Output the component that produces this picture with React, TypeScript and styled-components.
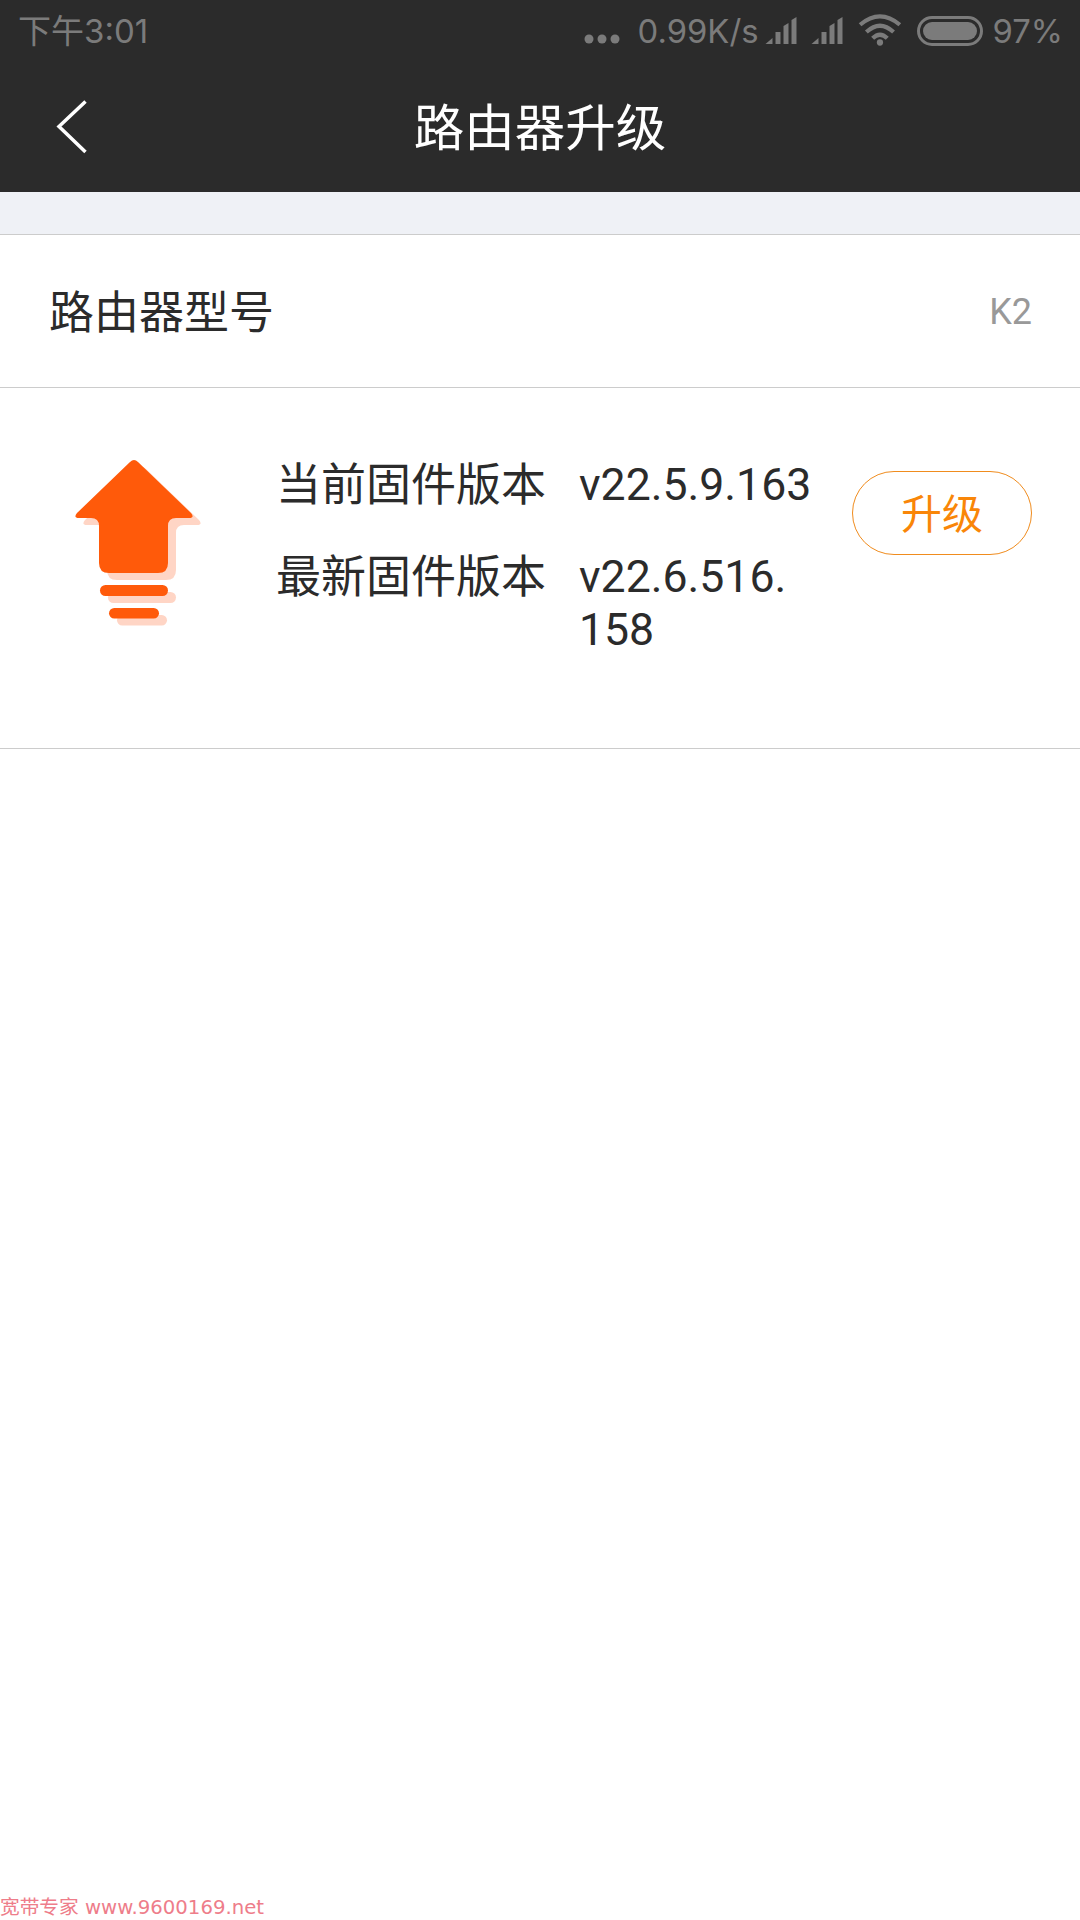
import React from "react";
import styled, { createGlobalStyle } from "styled-components";

const FONT = `Roboto, "Noto Sans CJK SC", sans-serif`;

const Global = createGlobalStyle`
  html, body { margin: 0; padding: 0; background: #fff; }
  body { font-family: ${FONT}; }
  * { box-sizing: border-box; }
`;

const Page = styled.div`
  position: relative;
  width: 1080px;
  height: 1920px;
  background: #fff;
  overflow: hidden;
`;

const Header = styled.header`
  height: 192px;
  background: #2b2b2b;
  display: flex;
  flex-direction: column;
`;

const StatusBar = styled.div`
  height: 62px;
  padding: 0 17px 0 18px;
  display: flex;
  align-items: center;
  justify-content: space-between;
  color: #7b7b7b;
`;

const StatusRight = styled.div`
  display: flex;
  align-items: center;
`;

const StatusText = styled.span<{ $ml?: number; $size?: number }>`
  margin-left: ${(p) => p.$ml ?? 0}px;
  font-size: ${(p) => p.$size ?? 32.8}px;
  line-height: 62px;
  font-family: "Inter", ${FONT};
  font-weight: 400;
`;

const StatusIcon = styled.svg<{ $ml?: number; $mt?: number }>`
  display: block;
  margin-left: ${(p) => p.$ml ?? 0}px;
  margin-top: ${(p) => p.$mt ?? 0}px;
  flex: none;
`;

const NavBar = styled.div`
  position: relative;
  flex: 1;
  display: flex;
  align-items: center;
  justify-content: center;
`;

const Back = styled.svg`
  position: absolute;
  left: 56px;
  top: 38px;
`;

const Title = styled.h1`
  margin: 0 0 6px;
  color: #fff;
  font-size: 50.5px;
  font-weight: 400;
`;

const Spacer = styled.div`
  height: 43px;
  background: #eff1f6;
  border-bottom: 1px solid #cccccc;
`;

const ModelRow = styled.div`
  height: 153px;
  padding: 0 48px 0 49px;
  display: flex;
  align-items: center;
  justify-content: space-between;
  border-bottom: 1px solid #cccccc;
`;

const ModelLabel = styled.span`
  font-size: 45px;
  color: #2b2b2b;
  margin-bottom: 4px;
`;

const ModelValue = styled.span`
  font-size: 36px;
  color: #999;
  margin-top: 2px;
`;

const FirmwareCard = styled.section`
  height: 361px;
  padding: 0 48px 0 70px;
  display: flex;
  align-items: flex-start;
  border-bottom: 1px solid #cccccc;
`;

const ArrowIcon = styled.svg`
  display: block;
  margin-top: 67px;
  flex: none;
`;

const Versions = styled.div`
  margin-left: 71px;
  padding-top: 71px;
  width: 576px;
  flex: none;
`;

const VersionRow = styled.div`
  display: flex;
  margin-bottom: 39px;
`;

const VersionLabel = styled.span`
  width: 303px;
  flex: none;
  font-size: 45px;
  line-height: 53px;
  color: #2b2b2b;
`;

const VersionValue = styled.span`
  width: 240px;
  font-size: 44.6px;
  line-height: 53px;
  color: #2b2b2b;
`;

const UpgradeButton = styled.button`
  width: 180px;
  height: 84px;
  margin-top: 83px;
  flex: none;
  border: 1.5px solid #f08c1e;
  border-radius: 42px;
  background: #fff;
  color: #f98608;
  font-family: ${FONT};
  font-size: 41px;
  padding: 0 0 4px;
`;

const Watermark = styled.div`
  position: absolute;
  left: 0;
  bottom: 0;
  height: 25px;
  line-height: 25px;
  color: #ee7d8a;
  font-size: 19.7px;
  white-space: nowrap;
  font-family: "DejaVu Sans", "Noto Sans CJK SC", sans-serif;
`;

const Signal = ({ ml }: { ml: number }) => (
  <StatusIcon $ml={ml} width="33" height="30" viewBox="0 0 32 30" fill="#7b7b7b">
    <path d="M0 28 L7 22 V28 Z" />
    <rect x="10" y="16" width="5" height="12" />
    <path d="M18 10 L23 7 V28 H18 Z" />
    <path d="M26 4 L31 1 V28 H26 Z" />
  </StatusIcon>
);

const ArrowShape = () => (
  <>
    <path d="M60 7 Q64 3 68 7 L121 58 Q125 63 119 63 H106 Q98 63 98 71 V108 Q98 118 88 118 H39 Q29 118 29 108 V71 Q29 63 21 63 H9 Q3 63 7 58 Z" />
    <rect x="30" y="130" width="68" height="11" rx="5.5" />
    <rect x="39" y="153" width="50" height="10.5" rx="5.25" />
  </>
);

export default function App() {
  return (
    <Page>
      <Global />
      <Header>
        <StatusBar>
          <StatusText $size={33}>下午3:01</StatusText>
          <StatusRight>
            <StatusIcon $mt={16} width="36" height="12" viewBox="0 0 36 12" fill="#7b7b7b">
              <circle cx="5" cy="6" r="4.5" />
              <circle cx="18" cy="6" r="4.5" />
              <circle cx="31" cy="6" r="4.5" />
            </StatusIcon>
            <StatusText $ml={18}>0.99K/s</StatusText>
            <Signal ml={6} />
            <Signal ml={13} />
            <StatusIcon $ml={14} width="46" height="36" viewBox="0 0 44 34" fill="none" stroke="#7b7b7b" strokeWidth="4">
              <path d="M2 11 Q21 -5 40 11" />
              <path d="M8 18 Q21 6 34 18" />
              <path d="M14 24 Q21 17 28 24" />
              <circle cx="21" cy="28" r="3" fill="#7b7b7b" stroke="none" />
            </StatusIcon>
            <StatusIcon $ml={13} width="66" height="30" viewBox="0 0 66 30">
              <rect x="1.5" y="1.5" width="63" height="27" rx="13.5" fill="none" stroke="#7b7b7b" strokeWidth="3" />
              <rect x="6" y="6" width="54" height="18" rx="9" fill="#7b7b7b" />
            </StatusIcon>
            <StatusText $ml={10}>97%</StatusText>
          </StatusRight>
        </StatusBar>
        <NavBar>
          <Back width="32" height="54" viewBox="0 0 32 54" fill="none" stroke="#fff" strokeWidth="3.5">
            <path d="M29.5 1.5 L3 26.5 L29.5 52" />
          </Back>
          <Title>路由器升级</Title>
        </NavBar>
      </Header>
      <Spacer />
      <ModelRow>
        <ModelLabel>路由器型号</ModelLabel>
        <ModelValue>K2</ModelValue>
      </ModelRow>
      <FirmwareCard>
        <ArrowIcon width="135" height="175" viewBox="0 0 135 175">
          <g fill="#ffd5c5" transform="translate(8 7)">
            <ArrowShape />
          </g>
          <g fill="#ff5a0a">
            <ArrowShape />
          </g>
        </ArrowIcon>
        <Versions>
          <VersionRow>
            <VersionLabel>当前固件版本</VersionLabel>
            <VersionValue>v22.5.9.163</VersionValue>
          </VersionRow>
          <VersionRow>
            <VersionLabel>最新固件版本</VersionLabel>
            <VersionValue>
              v22.6.516.<wbr />158
            </VersionValue>
          </VersionRow>
        </Versions>
        <UpgradeButton>升级</UpgradeButton>
      </FirmwareCard>
      <Watermark>宽带专家 www.9600169.net</Watermark>
    </Page>
  );
}
